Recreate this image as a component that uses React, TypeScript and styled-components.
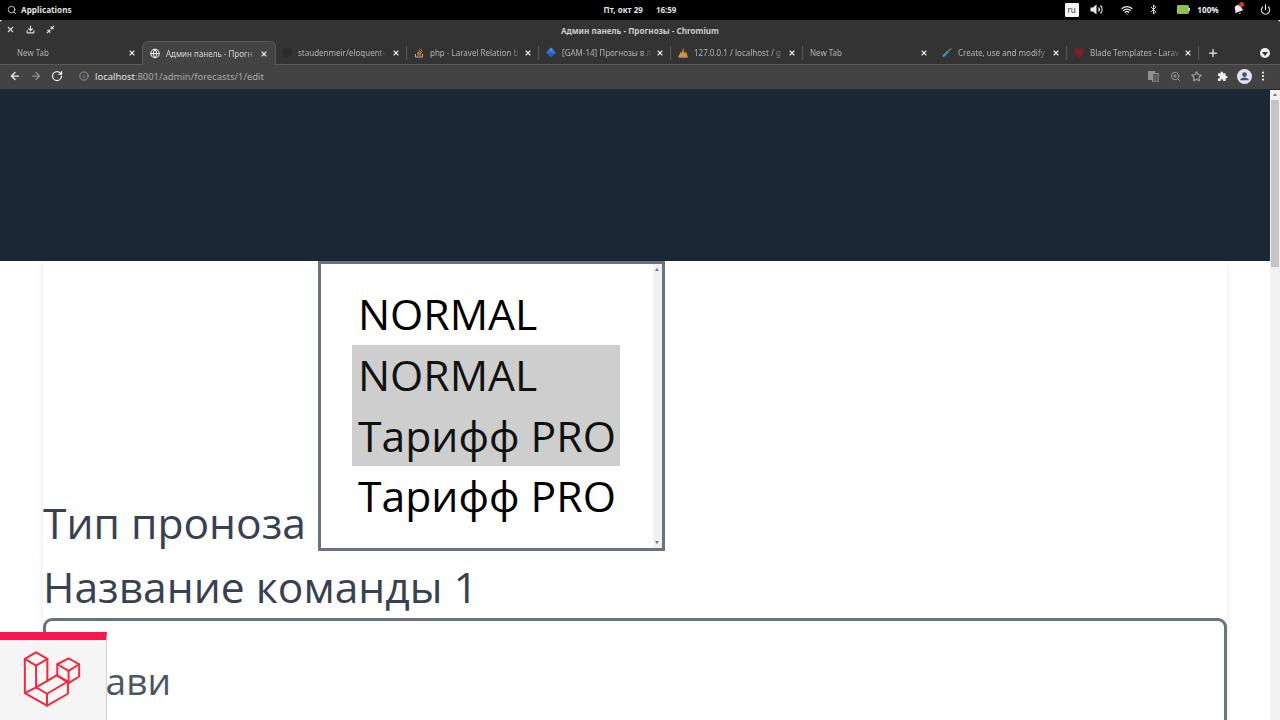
import React from "react";
import styled, { createGlobalStyle } from "styled-components";
import {
  ArrowLeft,
  ArrowRight,
  RotateCw,
  Info,
  Search,
  Star,
  Plus,
  X,
  Wifi,
  Bluetooth,
  Power,
  Download,
  Minimize2,
  Globe,
  ZoomIn,
  EllipsisVertical,
} from "lucide-react";

const GlobalStyle = createGlobalStyle`
  html, body {
    margin: 0;
    padding: 0;
    height: 720px;
    overflow: hidden;
    background: #fff;
  }
  * { box-sizing: border-box; }
`;

const Screen = styled.div`
  width: 1280px;
  height: 720px;
  position: relative;
  display: flex;
  flex-direction: column;
  overflow: hidden;
  font-family: "Noto Sans", "Open Sans", sans-serif;
`;

const TopPanel = styled.div`
  height: 20px;
  background: #000;
  color: #e2e2e2;
  font-size: 8.2px;
  font-weight: 700;
  display: grid;
  grid-template-columns: 1fr auto 1fr;
  align-items: center;
  padding: 0 1px 1px 7px;
  flex: none;
`;

const PanelLeft = styled.div`
  display: flex;
  align-items: center;
  gap: 4px;
`;

const Clock = styled.div`
  display: flex;
  gap: 13px;
  font-size: 8px;
  margin-right: 6px;
`;

const Tray = styled.div`
  display: flex;
  align-items: center;
  justify-content: flex-end;
  color: #eee;
`;

const TrayItem = styled.div<{ $w: number; $mr?: number }>`
  width: ${(p) => p.$w}px;
  margin-right: ${(p) => p.$mr || 0}px;
  display: flex;
  justify-content: center;
  align-items: center;
  position: relative;
`;

const LangBox = styled.div`
  width: 14px;
  height: 14px;
  background: #f4f4f4;
  color: #333;
  font-size: 8px;
  font-weight: 400;
  display: flex;
  align-items: center;
  justify-content: center;
  border-radius: 1px;
`;

const TiltedBell = styled.svg`
  transform: rotate(-20deg);
`;

const RedDot = styled.span`
  position: absolute;
  top: -2px;
  right: 7px;
  width: 5px;
  height: 5px;
  border-radius: 50%;
  background: #d8342c;
`;

const TitleBar = styled.div`
  height: 21px;
  background: #333333;
  color: #c9c9c9;
  font-size: 8.1px;
  font-weight: 700;
  display: flex;
  align-items: center;
  flex: none;
  position: relative;
  justify-content: center;
  border-radius: 3px 3px 0 0;
`;

const WindowButtons = styled.div`
  position: absolute;
  left: 6px;
  top: 5px;
  display: flex;
  gap: 11px;
  color: #ddd;
`;

const TabStrip = styled.div`
  height: 24px;
  background: #333333;
  display: flex;
  align-items: flex-end;
  padding-left: 11px;
  flex: none;
  border-bottom: 1px solid #5a5a5a;
`;

const Tab = styled.div<{ $active?: boolean; $sep?: boolean }>`
  width: ${(p) => (p.$active ? "134px" : "132px")};
  height: ${(p) => (p.$active ? "24px" : "23px")};
  flex: none;
  display: flex;
  align-items: center;
  gap: 6px;
  padding: 0 5px 0 7px;
  font-size: 8px;
  color: ${(p) => (p.$active ? "#d8d8d8" : "#b4b4b4")};
  background: ${(p) => (p.$active ? "#434343" : "transparent")};
  border-radius: ${(p) => (p.$active ? "6px 6px 0 0" : "0")};
  border: ${(p) => (p.$active ? "1px solid #5a5a5a" : "none")};
  border-bottom: none;
  position: relative;
  margin: ${(p) => (p.$active ? "0 -1px -1px" : "0")};
  &:first-child {
    padding-left: 6px;
  }
  &::after {
    content: "";
    display: ${(p) => (p.$sep ? "block" : "none")};
    position: absolute;
    right: 0;
    top: 5px;
    height: 14px;
    width: 1px;
    background: #5a5a5a;
  }
`;

const TabIconSlot = styled.span`
  width: 10px;
  height: 10px;
  display: flex;
  flex: none;
  align-items: center;
  justify-content: center;
`;

const TabTitle = styled.span`
  flex: 1;
  min-width: 0;
  margin-right: -6px;
  white-space: nowrap;
  overflow: hidden;
  -webkit-mask-image: linear-gradient(90deg, #000 86%, transparent 100%);
`;

const TabClose = styled.span`
  width: 12px;
  display: flex;
  flex: none;
  justify-content: center;
  color: #e2e2e2;
`;

const NewTabButton = styled.div`
  width: 24px;
  height: 23px;
  display: flex;
  align-items: center;
  justify-content: center;
  color: #eee;
  margin-left: 2px;
`;

const TabMenu = styled.div`
  width: 10px;
  height: 10px;
  margin-left: auto;
  margin-right: 10px;
  margin-bottom: 6px;
  border-radius: 50%;
  background: #eee;
  display: flex;
  align-items: center;
  justify-content: center;
`;

const MenuArrow = styled.span`
  width: 0;
  height: 0;
  margin-top: 1px;
  border-left: 3px solid transparent;
  border-right: 3px solid transparent;
  border-top: 4px solid #333;
`;

const Toolbar = styled.div`
  height: 24px;
  background: #434343;
  display: flex;
  align-items: center;
  padding: 0 6px 2px 9px;
  flex: none;
  color: #e8e8e8;
`;

const NavButton = styled.div<{ $muted?: boolean }>`
  width: 21px;
  display: flex;
  color: ${(p) => (p.$muted ? "#8e8e8e" : "#efefef")};
`;

const Address = styled.div`
  display: flex;
  align-items: center;
  gap: 6px;
  margin-left: 7px;
  flex: 1;
  font-size: 9.45px;
  color: #a9a9a9;
`;

const Host = styled.span`
  color: #e2e2e2;
`;

const ToolIcons = styled.div`
  display: flex;
  align-items: center;
`;

const ToolIcon = styled.div<{ $w: number; $muted?: boolean }>`
  width: ${(p) => p.$w}px;
  display: flex;
  justify-content: center;
  color: ${(p) => (p.$muted ? "#a0a0a0" : "#eee")};
`;

const Viewport = styled.div`
  flex: 1;
  display: flex;
  min-height: 0;
  border-top: 1px solid #1a2634;
`;

const Page = styled.div`
  flex: 1;
  min-width: 0;
  overflow: hidden;
  background: #fff;
`;

const Banner = styled.div`
  height: 171px;
  background: #1b2735;
`;

const Content = styled.div`
  padding: 0 43px;
  color: #374151;
`;

const Card = styled.div`
  background: #fff;
  height: 600px;
  box-shadow: 0 1px 6px rgba(0, 0, 0, 0.1);
  overflow: hidden;
  border-radius: 4px;
`;

const FieldRow = styled.div`
  display: flex;
  align-items: flex-end;
  gap: 12px;
`;

const Label = styled.div`
  font-family: "Open Sans", sans-serif;
  font-size: 42.6px;
  line-height: 58px;
  white-space: nowrap;
  margin-top: 6px;
`;

const ListBox = styled.div`
  width: 347px;
  height: 290px;
  border: 3px solid #6b7280;
  background: #fff;
  position: relative;
  padding: 20px 0 0 31px;
  font-family: "Open Sans", sans-serif;
  font-size: 42.7px;
  line-height: 60.8px;
  color: #000;
`;

const Option = styled.div<{ $selected?: boolean }>`
  width: 268px;
  padding-left: 6px;
  white-space: nowrap;
  background: ${(p) => (p.$selected ? "#cecece" : "transparent")};
  color: ${(p) => (p.$selected ? "#111" : "#000")};
`;

const ListScroll = styled.div`
  position: absolute;
  top: 0;
  right: 0;
  bottom: 0;
  width: 9px;
  background: #f1f1f1;
  display: flex;
  flex-direction: column;
  justify-content: space-between;
  align-items: center;
  padding: 4px 0;
`;

const Arrow = styled.span<{ $down?: boolean }>`
  width: 0;
  height: 0;
  border-left: 2px solid transparent;
  border-right: 2px solid transparent;
  ${(p) =>
    p.$down
      ? "border-top: 3px solid #777;"
      : "border-bottom: 3px solid #777;"}
`;

const TextInput = styled.div`
  height: 200px;
  margin-top: 3px;
  border: 3px solid #6b7280;
  border-radius: 9px;
  padding: 35px 0 0 10px;
  font-family: "Open Sans", sans-serif;
  font-size: 37px;
  line-height: 50px;
  color: #4b5563;
`;

const Scrollbar = styled.div`
  width: 10px;
  background: #f1f1f1;
  flex: none;
  display: flex;
  flex-direction: column;
  align-items: center;
  padding-top: 3px;
`;

const ScrollThumb = styled.div`
  width: 8px;
  height: 167px;
  margin-top: 4px;
  background: #c4c4c4;
`;

const LaravelBadge = styled.div`
  position: absolute;
  left: 0;
  bottom: 0;
  width: 107px;
  height: 88px;
  background: #f5f5f5;
  border-top: 8px solid #f9174f;
  border-right: 1px solid #d4d4d4;
  display: flex;
  align-items: center;
  justify-content: center;
  padding: 0 3px 2px 0;
`;

const tabs = [
  { title: "New Tab" },
  { title: "Админ панель - Прогн", active: true, icon: "globe" },
  { title: "staudenmeir/eloquent-", icon: "github", sep: true },
  { title: "php - Laravel Relation b", icon: "so", sep: true },
  { title: "[GAM-14] Прогнозы в л", icon: "jira", sep: true },
  { title: "127.0.0.1 / localhost / g", icon: "pma", sep: true },
  { title: "New Tab" },
  { title: "Create, use and modify", icon: "wand", sep: true },
  { title: "Blade Templates - Larav", icon: "laravel", sep: true },
];

function TabIcon({ name }: { name?: string }) {
  if (name === "globe") return <Globe size={11} color="#eee" strokeWidth={2.5} />;
  if (name === "github")
    return (
      <svg width="11" height="11" viewBox="0 0 10 10">
        <circle cx="5" cy="5" r="5" fill="#2b2b2b" />
      </svg>
    );
  if (name === "so")
    return (
      <svg width="11" height="11" viewBox="0 0 10 10" fill="none">
        <path d="M1.5 6.5v3h7v-3" stroke="#b5b5b5" />
        <path d="M3 7.5h4M3 6l4 .6M3.5 4.5l3.6 1.4M4.6 2.8l3 2.3M6 1l2.2 3" stroke="#d9822c" />
      </svg>
    );
  if (name === "jira")
    return (
      <svg width="11" height="11" viewBox="0 0 10 10">
        <path d="M5 0l2.5 2.5L5 5 2.5 2.5z" fill="#4a8cf0" />
        <path d="M7.5 2.5L10 5 7.5 7.5 5 5z" fill="#2f6fe0" />
        <path d="M2.5 2.5L5 5 2.5 7.5 0 5z" fill="#2f6fe0" />
        <path d="M5 5l2.5 2.5L5 10 2.5 7.5z" fill="#2560d0" />
      </svg>
    );
  if (name === "pma")
    return (
      <svg width="11" height="11" viewBox="0 0 10 10">
        <path d="M0 10L3 4l1 2 1-6 1.5 6L8 4l2 6z" fill="#e8912c" />
        <path d="M2 10l1-2 1 1 1-2 1 2 1-1 1 2z" fill="#8c8fb0" />
      </svg>
    );
  if (name === "wand")
    return (
      <svg width="11" height="11" viewBox="0 0 10 10" fill="none">
        <path d="M1 9l5-5" stroke="#3a9ad8" strokeWidth="2" />
        <path d="M6 4l3-3" stroke="#9fd0ea" strokeWidth="1" />
      </svg>
    );
  if (name === "laravel")
    return (
      <svg width="12" height="12" viewBox="0 0 10 10">
        <path d="M0 1l3-1 2 2 2-2 3 1-1 5-4 4-4-4z" fill="#7d1f2a" />
      </svg>
    );
  return null;
}

function LaravelMark() {
  return (
    <svg
      width="60"
      height="58"
      viewBox="20 15 180 175"
      fill="none"
      stroke="#f02a3c"
      strokeWidth="6"
      strokeLinejoin="round"
      strokeLinecap="round"
    >
      <path d="M62 22 L96 42 L62 62 L28 42 Z" />
      <path d="M28 42 V145 L95 183 L158 147 V110" />
      <path d="M62 62 V128" />
      <path d="M96 42 V108 L126 90" />
      <path d="M28 145 L62 128 L95 147 L158 110 L126 92" />
      <path d="M62 128 L96 108" />
      <path d="M95 147 V183" />
      <path d="M160 40 L192 58 L160 78 L126 58 Z" />
      <path d="M126 58 V92 L160 115 L192 95 V58" />
      <path d="M160 78 V115" />
    </svg>
  );
}

function SpeakerIcon() {
  return (
    <svg width="14" height="13" viewBox="0 0 14 13" fill="none">
      <path d="M0.5 4.5H3L6.5 1.5V11.5L3 8.5H0.5Z" fill="#eee" />
      <path d="M8.5 4.5a3 3 0 0 1 0 4M10.5 2.5a6 6 0 0 1 0 8" stroke="#eee" strokeWidth="1.2" />
    </svg>
  );
}

function BatteryIcon() {
  return (
    <svg width="13" height="9" viewBox="0 0 13 9">
      <rect x="0" y="0.5" width="11.5" height="8" rx="1" fill="#8bc34a" stroke="#d8d8d8" strokeWidth="0.6" />
      <rect x="11.5" y="3" width="1.5" height="3" fill="#d8d8d8" />
    </svg>
  );
}

function TranslateIcon() {
  return (
    <svg width="11" height="11" viewBox="0 0 11 11">
      <rect x="0" y="0" width="7" height="9" fill="#8f8f8f" />
      <rect x="4.5" y="2.5" width="6.5" height="8.5" fill="#5e5e5e" stroke="#9a9a9a" strokeWidth="0.7" />
    </svg>
  );
}

function PuzzleIcon() {
  return (
    <svg width="11" height="11" viewBox="0 0 24 24" fill="#eee">
      <path d="M20.5 11H19V7a2 2 0 0 0-2-2h-4V3.5a2.5 2.5 0 0 0-5 0V5H4a2 2 0 0 0-2 2v3.8h1.5a2.7 2.7 0 0 1 0 5.4H2V20a2 2 0 0 0 2 2h3.8v-1.5a2.7 2.7 0 0 1 5.4 0V22H17a2 2 0 0 0 2-2v-4h1.5a2.5 2.5 0 0 0 0-5z" />
    </svg>
  );
}

function AvatarIcon() {
  return (
    <svg width="15" height="15" viewBox="0 0 15 15">
      <circle cx="7.5" cy="7.5" r="7.5" fill="#dfe4ee" />
      <circle cx="7.5" cy="5.6" r="2.3" fill="#47505e" />
      <path d="M3.2 11.3c0-1.8 2.4-2.7 4.3-2.7s4.3.9 4.3 2.7z" fill="#47505e" />
    </svg>
  );
}

export default function App() {
  return (
    <Screen>
      <GlobalStyle />
      <TopPanel>
        <PanelLeft>
          <Search size={10} strokeWidth={2} />
          <span>Applications</span>
        </PanelLeft>
        <Clock>
          <span>Пт, окт 29</span>
          <span>16:59</span>
        </Clock>
        <Tray>
          <TrayItem $w={27}>
            <LangBox>ru</LangBox>
          </TrayItem>
          <TrayItem $w={24}>
            <SpeakerIcon />
          </TrayItem>
          <TrayItem $w={36}>
            <Wifi size={12} strokeWidth={2.5} />
          </TrayItem>
          <TrayItem $w={16} $mr={14}>
            <Bluetooth size={11} />
          </TrayItem>
          <TrayItem $w={16}>
            <BatteryIcon />
          </TrayItem>
          <TrayItem $w={34}>100%</TrayItem>
          <TrayItem $w={26}>
            <TiltedBell width="11" height="11" viewBox="0 0 24 24" fill="#eee">
              <path d="M12 2a7 7 0 0 0-7 7c0 6-3 8-3 8h20s-3-2-3-8a7 7 0 0 0-7-7z" />
              <path d="M9.5 20a2.6 2.6 0 0 0 5 0z" />
            </TiltedBell>
            <RedDot />
          </TrayItem>
          <TrayItem $w={28}>
            <Power size={11} strokeWidth={2.5} />
          </TrayItem>
        </Tray>
      </TopPanel>
      <TitleBar>
        <WindowButtons>
          <X size={9} strokeWidth={3} />
          <Download size={9} strokeWidth={3} />
          <Minimize2 size={9} strokeWidth={3} />
        </WindowButtons>
        Админ панель - Прогнозы - Chromium
      </TitleBar>
      <TabStrip>
        {tabs.map((t, i) => (
          <Tab key={i} $active={t.active} $sep={t.sep}>
            {t.icon && (
              <TabIconSlot>
                <TabIcon name={t.icon} />
              </TabIconSlot>
            )}
            <TabTitle>{t.title}</TabTitle>
            <TabClose>
              <X size={8} strokeWidth={3.5} />
            </TabClose>
          </Tab>
        ))}
        <NewTabButton>
          <Plus size={12} strokeWidth={2.5} />
        </NewTabButton>
        <TabMenu>
          <MenuArrow />
        </TabMenu>
      </TabStrip>
      <Toolbar>
        <NavButton>
          <ArrowLeft size={12} strokeWidth={2.5} />
        </NavButton>
        <NavButton $muted>
          <ArrowRight size={12} strokeWidth={2.5} />
        </NavButton>
        <NavButton>
          <RotateCw size={12} strokeWidth={2.5} />
        </NavButton>
        <Address>
          <Info size={10} />
          <span>
            <Host>localhost</Host>:8001/admin/forecasts/1/edit
          </span>
        </Address>
        <ToolIcons>
          <ToolIcon $w={27} $muted>
            <TranslateIcon />
          </ToolIcon>
          <ToolIcon $w={17} $muted>
            <ZoomIn size={11} />
          </ToolIcon>
          <ToolIcon $w={25} $muted>
            <Star size={11} strokeWidth={2.5} />
          </ToolIcon>
          <ToolIcon $w={27}>
            <PuzzleIcon />
          </ToolIcon>
          <ToolIcon $w={16}>
            <AvatarIcon />
          </ToolIcon>
          <ToolIcon $w={22}>
            <EllipsisVertical size={12} strokeWidth={2.5} />
          </ToolIcon>
        </ToolIcons>
      </Toolbar>
      <Viewport>
        <Page>
          <Banner />
          <Content>
            <Card>
              <FieldRow>
                <Label>Тип проноза</Label>
                <ListBox>
                  <Option>NORMAL</Option>
                  <Option $selected>NORMAL</Option>
                  <Option $selected>Тарифф PRO</Option>
                  <Option>Тарифф PRO</Option>
                  <ListScroll>
                    <Arrow />
                    <Arrow $down />
                  </ListScroll>
                </ListBox>
              </FieldRow>
              <Label>Название команды 1</Label>
              <TextInput>Прави</TextInput>
            </Card>
          </Content>
        </Page>
        <Scrollbar>
          <Arrow />
          <ScrollThumb />
        </Scrollbar>
      </Viewport>
      <LaravelBadge>
        <LaravelMark />
      </LaravelBadge>
    </Screen>
  );
}
